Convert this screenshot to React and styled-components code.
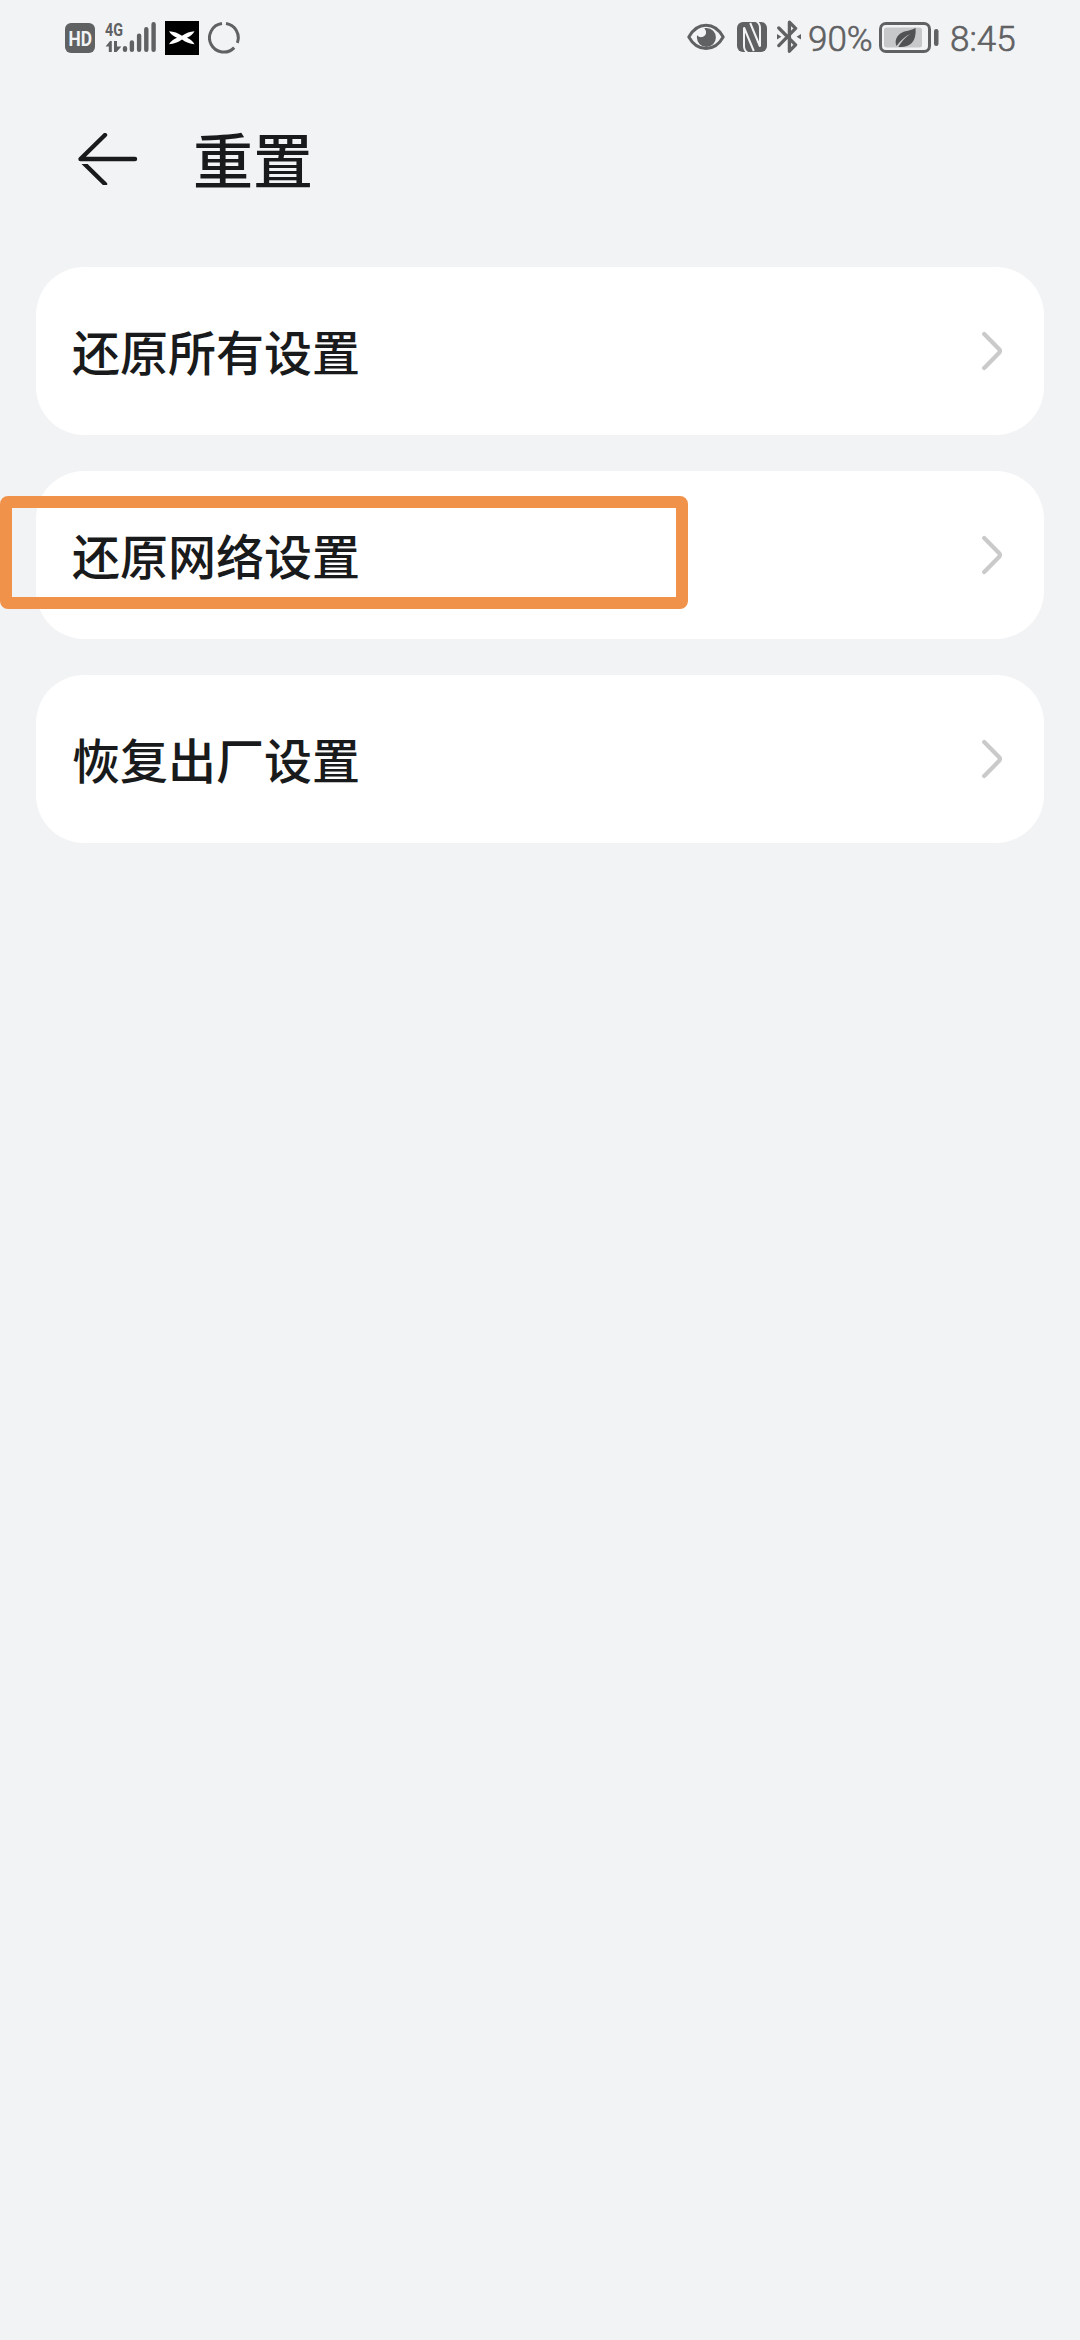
import React from "react";
import styled, { createGlobalStyle } from "styled-components";

const items = [
  { id: "all", label: "还原所有设置" },
  { id: "network", label: "还原网络设置", marked: true },
  { id: "factory", label: "恢复出厂设置" },
];

function SignalIcon() {
  return (
    <Icon width="52" height="40" viewBox="0 0 52 40">
      <text x="0" y="18" fontSize="19" fontWeight="700" textLength="18" lengthAdjust="spacingAndGlyphs">
        4G
      </text>
      <path d="M.6 28.600L5 23h1.800v11H3.800v-5.400zM9 23h3v5.400H16.400L11.600 34H9z" />
      <g stroke="currentColor" strokeWidth="4.400" strokeLinecap="round">
        <path d="M20 30.200v1.600M26.900 24.400v7.400M34.100 17.600v14.200M41.300 11.200v20.600M48.600 6.200v25.600" />
      </g>
    </Icon>
  );
}

function StatusIcons() {
  return (
    <>
      <Icon width="30" height="40" viewBox="0 0 30 40">
        <rect y="5" width="30" height="30" rx="6" />
        <text x="3.500" y="27.600" fontSize="20" fontWeight="700" fill="#f2f3f5" textLength="23.500" lengthAdjust="spacingAndGlyphs">
          HD
        </text>
      </Icon>
      <Gap $w={10} />
      <SignalIcon />
      <Gap $w={8} />
      <Icon width="34" height="40" viewBox="0 0 34 40">
        <rect y="3" width="34" height="34" fill="#000" />
        <path
          fill="#fff"
          d="M4 13.200c5 .4 9 1.500 13 4.600 4-3.100 8-4.200 12.500-4.600-1.500 3-4 4.800-7.500 6.500 3.500 1.700 6 3.500 7.500 6.500-4.500-.4-8.500-1.600-12.500-4.700-4 3.100-8 4.300-13 4.700 1.500-3 4.500-4.800 8-6.500-3.500-1.700-6.500-3.500-8-6.500z"
        />
      </Icon>
      <Gap $w={9} />
      <Icon width="32" height="40" viewBox="0 0 32 40">
        <g fill="none" stroke="currentColor" strokeWidth="3">
          <path d="M18 5.600A14.300 14.300 0 0 1 29.300 24.900M26.200 29.600A14.300 14.300 0 1 1 14 5.600" />
        </g>
      </Icon>
    </>
  );
}

function EyeIcon() {
  return (
    <Icon width="38" height="40" viewBox="0 0 38 40">
      <path
        d="M1.800 19C6 11.500 12 7.300 19 7.300S32 11.500 36.200 19C32 26.500 26 30.500 19 30.500S6 26.500 1.800 19z"
        fill="none"
        stroke="currentColor"
        strokeWidth="3"
        strokeLinejoin="round"
      />
      <path d="M19.500 10a9.500 9.500 0 1 1-9.600 9.500c0-.8.100-1.500.3-2.200 1.200 1.500 2.800 2 4.600 1.800 3.800-.4 5.600-4.600 3.200-7.800-.4-.5-.6-.9-.6-1.100.7-.2 1.400-.2 2.100-.2z" />
    </Icon>
  );
}

function NfcIcon() {
  return (
    <Icon width="30" height="40" viewBox="0 0 30 40">
      <rect y="4" width="30" height="30" rx="6" />
      <path
        d="M10.500 34.500C7.800 33 7 30.500 7 28V9.500L16.800 33M19.500 3.500C22.200 5 23 7.500 23 10V28.500L13.200 5"
        fill="none"
        stroke="#f2f3f5"
        strokeWidth="2"
      />
    </Icon>
  );
}

function BluetoothIcon() {
  return (
    <Icon width="24" height="40" viewBox="0 0 24 40">
      <path
        d="M1.800 10L18.600 26.800 12.400 33.200V4.200L18.600 10.400 1.800 27.600"
        fill="none"
        stroke="currentColor"
        strokeWidth="3.300"
        strokeLinecap="round"
        strokeLinejoin="round"
      />
      <path d="M0 16L4.400 18.800 0 21.600zM24 16L19.600 18.800l4.400 2.800z" />
    </Icon>
  );
}

function BatteryIcon() {
  return (
    <Icon width="60" height="40" viewBox="0 0 60 40">
      <rect x="1.500" y="5.500" width="49" height="28" rx="5.500" fill="none" stroke="currentColor" strokeWidth="3" />
      <rect x="5" y="9.500" width="38" height="20" rx="2.500" fill="#c7c8ca" />
      <rect x="55" y="11" width="4.500" height="17" rx="2.200" />
      <path
        fill="#505254"
        d="M36.500 9.800c.5 6-.3 11.700-3.700 15.200-3.200 3.200-7.900 4.500-13.500 4 2.700-5 6.500-9.500 12.200-13.300-5.700 2.800-10.300 6.800-14 12.300-2.300-5.500.3-11 5.700-13.500 4-1.900 9.300-1.700 13.300-4.700z"
      />
    </Icon>
  );
}

export default function App() {
  return (
    <>
      <GlobalStyle />
      <Screen>
        <StatusBar>
          <StatusIcons />
          <Spacer />
          <EyeIcon />
          <Gap $w={12} />
          <NfcIcon />
          <Gap $w={10} />
          <BluetoothIcon />
          <Gap $w={7} />
          <StatusText $w={71}>90%</StatusText>
          <BatteryIcon />
          <Gap $w={11} />
          <StatusText $w={65}>8:45</StatusText>
        </StatusBar>

        <Header>
          <BackButton aria-label="返回">
            <svg width="60" height="52" viewBox="0 0 60 52" fill="none" stroke="#191a1b" strokeWidth="4.400" strokeLinecap="round">
              <path d="M3.500 28L27 51" />
              <path d="M0 29.200h12" stroke="#f2f3f5" strokeWidth="3.600" strokeLinecap="butt" />
              <path d="M57 26H2.500L27 2" strokeLinejoin="round" />
            </svg>
          </BackButton>
          <Title>重置</Title>
        </Header>

        <List>
          {items.map((item) => (
            <Card key={item.id}>
              <Label>{item.label}</Label>
              <svg width="22" height="40" viewBox="0 0 22 40" fill="none" stroke="#cacaca" strokeWidth="4.200" strokeLinecap="round" strokeLinejoin="round">
                <path d="M3.200 3L18.200 18.200Q19.700 20 18.200 21.800L3.200 37" />
              </svg>
              {item.marked && <Marker />}
            </Card>
          ))}
        </List>
      </Screen>
    </>
  );
}

const GlobalStyle = createGlobalStyle`
  body {
    margin: 0;
    background: #f2f3f5;
  }
`;

const Screen = styled.div`
  box-sizing: border-box;
  width: 1080px;
  height: 2340px;
  overflow: hidden;
  background: #f2f3f5;
  color: #191a1b;
  font-family: "Noto Sans CJK SC", sans-serif;
`;

const StatusBar = styled.div`
  display: flex;
  align-items: center;
  box-sizing: border-box;
  height: 76px;
  padding: 0 65px;
  color: #5f6163;
`;

const Icon = styled.svg`
  flex: none;
  fill: currentColor;
  font-family: Roboto, sans-serif;
`;

const Gap = styled.span`
  flex: none;
  width: ${(props) => props.$w}px;
`;

const Spacer = styled.span`
  flex: 1;
`;

const StatusText = styled.span`
  flex: none;
  width: ${(props) => props.$w}px;
  padding-top: 3px;
  font-family: Roboto, sans-serif;
  font-size: 35px;
  font-weight: 300;
  line-height: 40px;
  white-space: nowrap;
  -webkit-text-stroke: 0.6px currentColor;
`;

const Header = styled.header`
  display: flex;
  align-items: center;
  height: 166px;
  padding: 0 78px;
  box-sizing: border-box;
  margin-bottom: 25px;
`;

const BackButton = styled.button`
  display: flex;
  padding: 0;
  border: none;
  background: none;
`;

const Title = styled.h1`
  margin: 0 0 0 55px;
  padding-bottom: 3px;
  font-size: 60px;
  font-weight: 500;
  line-height: 80px;
`;

const List = styled.div`
  display: flex;
  flex-direction: column;
  gap: 36px;
  padding: 0 36px;
`;

const Card = styled.div`
  position: relative;
  display: flex;
  align-items: center;
  justify-content: space-between;
  box-sizing: border-box;
  height: 168px;
  padding: 0 41px 0 36px;
  border-radius: 48px;
  background: #fff;
`;

const Label = styled.span`
  padding-bottom: 3px;
  font-size: 48px;
  font-weight: 500;
  line-height: 64px;
`;

const Marker = styled.div`
  position: absolute;
  top: 25px;
  left: -36px;
  box-sizing: border-box;
  width: 688px;
  height: 113px;
  border: 12px solid #f1924b;
  border-radius: 8px;
`;
